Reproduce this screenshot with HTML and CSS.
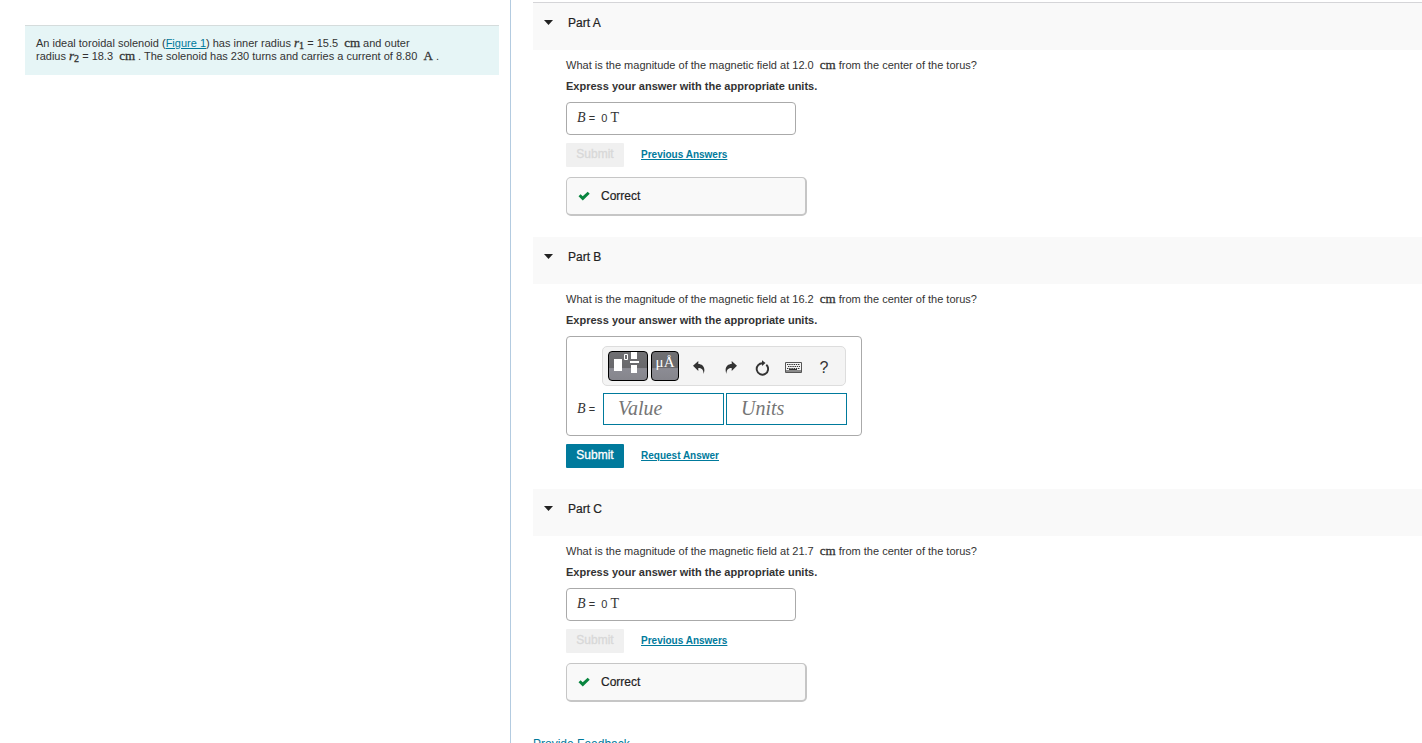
FILE: index.html
```html
<!DOCTYPE html>
<html lang="en">
<head>
<meta charset="utf-8">
<title>Toroidal solenoid</title>
<link rel="stylesheet" href="styles.css">
</head>
<body>
<div class="layout">
  <aside class="problem">
    <p class="intro">An ideal toroidal solenoid (<a href="#figure1">Figure 1</a>) has inner radius <span class="math"><i>r</i><sub>1</sub></span> = 15.5 &nbsp;<span class="math">cm</span> and outer<br>radius <span class="math"><i>r</i><sub>2</sub></span> = 18.3 &nbsp;<span class="math">cm</span> . The solenoid has 230 turns and carries a current of 8.80 &nbsp;<span class="math">A</span> .</p>
  </aside>
  <main class="parts">
    <section class="part part-first">
      <h2 class="part-head"><svg class="caret" viewBox="0 0 9 5"><path d="M0 0h9L4.500 5z"/></svg>Part A</h2>
      <div class="part-body">
        <p class="question">What is the magnitude of the magnetic field at 12.0 &nbsp;<span class="math">cm</span> from the center of the torus?</p>
        <p class="hint">Express your answer with the appropriate units.</p>
        <div class="answer"><i class="var">B</i> = &nbsp;0 <span class="unit">T</span></div>
        <div class="actions"><button class="submit" disabled>Submit</button><a href="#previous-a">Previous Answers</a></div>
        <div class="result"><svg class="check" viewBox="0 0 12 10"><path d="M0.500 5.200 2.600 3.200 4.700 5.300 9.700 0.800 11.700 2.700 4.800 9.400z"/></svg>Correct</div>
      </div>
    </section>
    <section class="part">
      <h2 class="part-head"><svg class="caret" viewBox="0 0 9 5"><path d="M0 0h9L4.500 5z"/></svg>Part B</h2>
      <div class="part-body">
        <p class="question">What is the magnitude of the magnetic field at 16.2 &nbsp;<span class="math">cm</span> from the center of the torus?</p>
        <p class="hint">Express your answer with the appropriate units.</p>
        <div class="editor">
          <div class="toolbar">
            <button class="dark template" aria-label="Templates"><svg width="38" height="28" viewBox="0 0 38 28" fill="#fff"><path d="M5 7h8v12H5zM22 0h6v7h-6zM21 9h9v2h-9zM22 13h6v8h-6z"/><path d="M15.500 2.500h3v5h-3z" fill="none" stroke="#fff"/></svg></button>
            <button class="dark symbols" aria-label="Symbols">μÅ</button>
            <button class="tool" aria-label="Undo"><svg width="12" height="13" viewBox="0 0 12 13"><path d="M0 4.800 5.300 0v3C9.500 3 13 6.500 10.600 13 10.500 8.500 8.500 7 5.300 7v3z"/></svg></button>
            <button class="tool" aria-label="Redo"><svg width="12" height="13" viewBox="0 0 12 13"><path d="M12 4.800 6.700 0v3C2.500 3-1 6.500 1.400 13 1.500 8.500 3.500 7 6.700 7v3z"/></svg></button>
            <button class="tool" aria-label="Reset"><svg width="14" height="16" viewBox="0 0 14 16"><path d="M11.300 4.800A5.700 5.700 0 1 1 8 3.300" fill="none" stroke="currentColor" stroke-width="1.900"/><path d="M7 .3 10.500 3 7 6z"/></svg></button>
            <button class="tool" aria-label="Keyboard shortcuts"><svg width="17" height="11" viewBox="0 0 17 11"><path d="M.5.5h16v10H.5z" fill="#f4f4f4" stroke="#555"/><path d="M2 2.500h13M3 4.500h12M2 6.500h13" stroke="#333" stroke-dasharray="1.400 .8"/><path d="M1 8h15v2H1z" fill="#8a8a8a"/><path d="M4 7.500h8" stroke="#333"/></svg></button>
            <button class="tool help" aria-label="Help">?</button>
          </div>
          <label class="eq" for="value"><i class="var">B</i> =</label>
          <div class="fields">
            <input id="value" type="text" placeholder="Value">
            <input id="units" type="text" placeholder="Units" aria-label="Units">
          </div>
        </div>
        <div class="actions"><button class="submit">Submit</button><a href="#request">Request Answer</a></div>
      </div>
    </section>
    <section class="part">
      <h2 class="part-head"><svg class="caret" viewBox="0 0 9 5"><path d="M0 0h9L4.500 5z"/></svg>Part C</h2>
      <div class="part-body">
        <p class="question">What is the magnitude of the magnetic field at 21.7 &nbsp;<span class="math">cm</span> from the center of the torus?</p>
        <p class="hint">Express your answer with the appropriate units.</p>
        <div class="answer"><i class="var">B</i> = &nbsp;0 <span class="unit">T</span></div>
        <div class="actions"><button class="submit" disabled>Submit</button><a href="#previous-c">Previous Answers</a></div>
        <div class="result"><svg class="check" viewBox="0 0 12 10"><path d="M0.500 5.200 2.600 3.200 4.700 5.300 9.700 0.800 11.700 2.700 4.800 9.400z"/></svg>Correct</div>
      </div>
    </section>
    <a class="feedback" href="#feedback">Provide Feedback</a>
  </main>
</div>
</body>
</html>
```
FILE: styles.css
```css
* { box-sizing: border-box; }
body {
  margin: 0;
  height: 100vh;
  overflow: hidden;
  background: #fff;
  color: #333;
  font: 11px/13px "Liberation Sans", Arial, sans-serif;
}
p, h2 { margin: 0; }
a { color: #007a9c; }
button, input { font-family: inherit; margin: 0; }
.layout {
  display: grid;
  grid-template-columns: 23fr 41fr;
  height: 100%;
}
.problem {
  min-width: 0;
  padding: 25px 11px 0 25px;
  border-right: 1px solid #b3cbe0;
}
.intro {
  padding: 11px 11px 12px;
  border-top: 1px solid #d5dcdc;
  background: #e6f5f6;
}
.math {
  font: 13px/10px "Liberation Serif", serif;
  -webkit-text-stroke: 0.3px;
}
.math sub { font-size: 10px; line-height: 0; vertical-align: -2px; }
.parts { min-width: 0; padding: 2px 0 0 22px; }
.part { margin-bottom: 21px; }
.part-head {
  display: flex;
  align-items: center;
  height: 47px;
  padding: 0 11px 8px;
  background: #f9f9f9;
  color: #222;
  font-size: 12px;
  font-weight: 400;
  line-height: 14px;
  -webkit-text-stroke: 0.2px;
}
.part-first .part-head { height: 48px; border-top: 1px solid #d5d5d8; }
.caret { width: 9px; height: 5px; margin-right: 15px; fill: #222; }
.part-body { padding: 9px 33px 0; }
.question { margin-bottom: 8px; }
.hint { margin-bottom: 9px; font-weight: 700; }
.var { font: italic 14px/13px "Liberation Serif", serif; }
.unit { font: 14px/13px "Liberation Serif", serif; }
.answer {
  width: 230px;
  height: 33px;
  padding: 8px 10px;
  border: 1px solid #aaa;
  border-radius: 4px;
}
.actions { display: flex; align-items: center; gap: 17px; margin-top: 8px; }
.actions a { padding-bottom: 1px; font-size: 10px; font-weight: 700; line-height: 12px; }
.submit {
  width: 58px;
  height: 24px;
  padding: 0 0 2px;
  border: 0;
  border-radius: 1px;
  background: #007a9c;
  color: #fff;
  font-size: 12px;
  -webkit-text-stroke: 0.3px;
}
.submit:disabled { background: #f0f0f0; color: #d8d8d8; }
.result {
  display: flex;
  align-items: center;
  gap: 11px;
  width: 241px;
  height: 39px;
  margin-top: 10px;
  padding: 0 11px;
  border: 1px solid #c6c6c6;
  border-right-width: 2px;
  border-bottom-width: 2px;
  border-radius: 5px;
  background: #f9f9f9;
  color: #222;
  font-size: 12px;
  -webkit-text-stroke: 0.2px;
}
.check { width: 12px; height: 10px; fill: #08853f; }
.editor {
  display: grid;
  grid-template-columns: 26px minmax(0, 1fr);
  row-gap: 7px;
  align-items: center;
  width: 296px;
  padding: 9px 14px 10px 10px;
  border: 1px solid #aaa;
  border-radius: 4px;
}
.toolbar {
  grid-column: 2;
  display: flex;
  align-items: center;
  height: 40px;
  margin: 0 1px 0 -1px;
  padding-left: 5px;
  border: 1px solid #ddd;
  border-radius: 5px;
  background: #f4f4f4;
}
.dark {
  height: 30px;
  margin-right: 3px;
  padding: 0;
  border: 1px solid #000;
  border-radius: 4px;
  background: linear-gradient(#707073 0, #68686b 58%, #8c8c94 59%, #85858c 100%);
  color: #fff;
}
.dark svg { display: block; }
.template { width: 40px; }
.symbols { width: 28px; padding-bottom: 8px; font: 15px/18px "Liberation Serif", serif; }
.tool {
  display: flex;
  justify-content: center;
  width: 28px;
  margin-right: 3px;
  padding: 3px 0 0;
  border: 0;
  background: none;
  color: #333;
}
.tool svg { fill: currentColor; }
.symbols + .tool { margin: 0 4px 0 3px; }
.help { margin: 0; font-size: 16px; line-height: 18px; }
.eq { white-space: nowrap; }
.fields { display: flex; gap: 2px; }
.fields input {
  flex: 1 1 0;
  min-width: 0;
  height: 32px;
  padding: 0 14px 2px;
  border: 1px solid #007a9c;
  border-radius: 0;
  background: #fff;
  color: #333;
  font: italic 20px/24px "Liberation Serif", serif;
}
.fields input::placeholder { color: #757575; opacity: 1; }
.feedback { display: block; padding-top: 14px; font-size: 12px; line-height: 14px; }
```
